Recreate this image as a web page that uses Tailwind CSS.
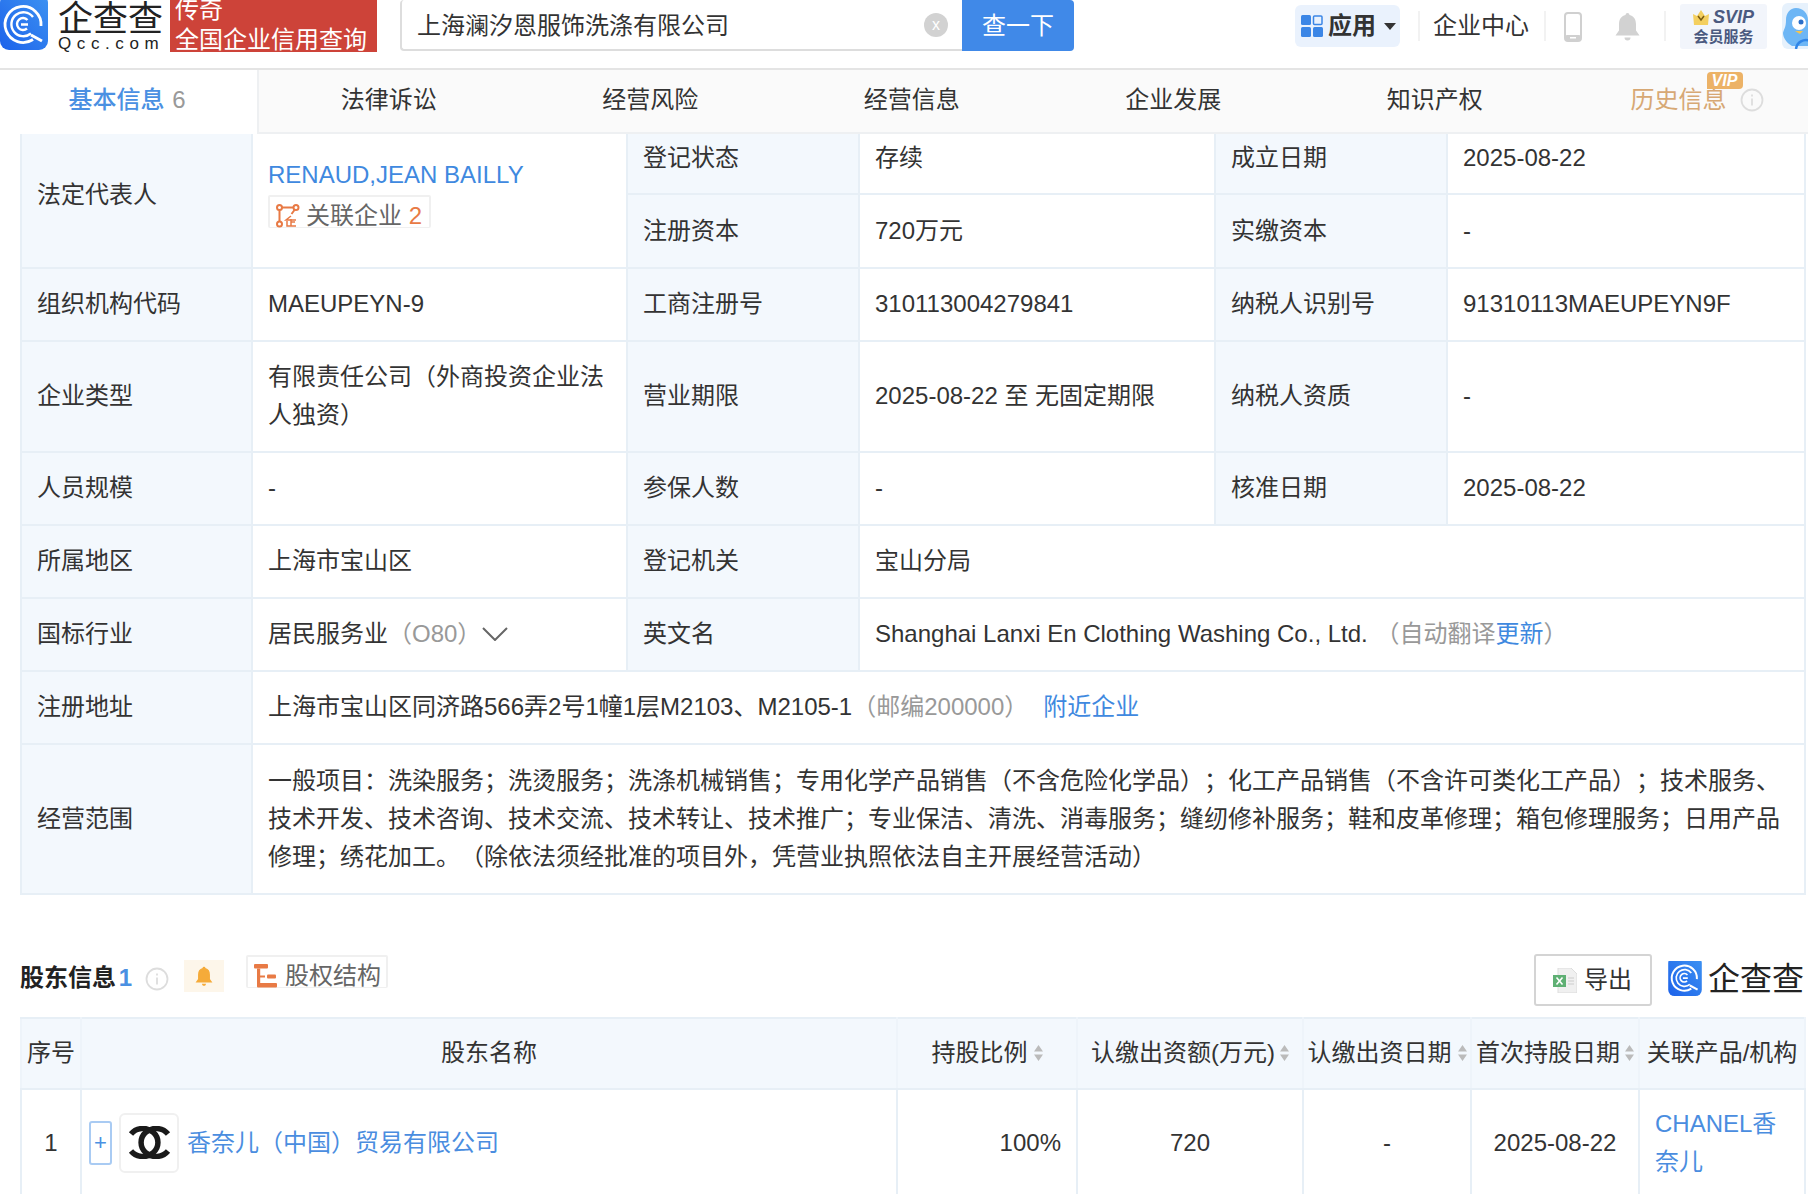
<!DOCTYPE html>
<html lang="zh-CN">
<head>
  <meta charset="UTF-8">
  <meta name="viewport" content="width=device-width, initial-scale=1.0">
  <title>上海澜汐恩服饰洗涤有限公司</title>
  <script src="https://cdn.jsdelivr.net/npm/@tailwindcss/browser@4"></script>
</head>
<body class="h-[1194px] w-[1808px] overflow-hidden bg-white text-[24px] text-[#333] [text-spacing-trim:space-all] font-['Liberation_Sans','Noto_Sans_CJK_SC',sans-serif]">
  <svg class="absolute size-0">
    <defs>
      <linearGradient id="qcc" x1="1" y1="0" x2="0" y2="1">
        <stop offset="0" stop-color="#3d93f2"/>
        <stop offset="1" stop-color="#1d62ea"/>
      </linearGradient>
      <symbol id="qcc-logo" viewBox="0 0 48 50">
        <rect x="0" y="-6" width="48" height="56" rx="9" fill="url(#qcc)"/>
        <path d="M33 39.500A18 18 0 1 1 41 26" fill="none" stroke="#fff" stroke-width="2.800"/>
        <path d="M31 33.500A12 12 0 1 1 33 17" fill="none" stroke="#fff" stroke-width="2.400"/>
        <path d="M27 28.500A6 6 0 1 1 27.500 20M21 24.500H28" fill="none" stroke="#fff" stroke-width="2.400"/>
        <path d="M31 35L42 41" stroke="#fff" stroke-width="3"/>
      </symbol>
    </defs>
  </svg>

  <!-- top bar -->
  <header class="flex h-[68px] items-start">
    <svg class="h-[50px] w-[48px] shrink-0"><use href="#qcc-logo"/></svg>
    <div class="ml-[10px] w-[104px] shrink-0 text-[#222]">
      <div class="mt-[1px] h-[36px] text-[35px] leading-[36px] whitespace-nowrap">企查查</div>
      <div class="text-[17px] leading-[14px] tracking-[5.600px] whitespace-nowrap">Qcc.com</div>
    </div>
    <div class="ml-[8px] h-[52px] w-[207px] shrink-0 overflow-hidden bg-[#cd4339] pl-[5px] leading-[30px] text-white">
      <div class="-mt-[5px]">传奇</div>
      <div class="whitespace-nowrap">全国企业信用查询</div>
    </div>
    <div class="ml-[23px] flex h-[51px] w-[562px] shrink-0 items-center justify-between rounded-l-[4px] border-2 border-r-0 border-t-0 border-[#ddd] pl-[15px] pr-[14px]">
      <span class="pt-[2px]">上海澜汐恩服饰洗涤有限公司</span>
      <span class="flex size-[24px] items-center justify-center rounded-full bg-[#d2d2d2] text-[16px] leading-none text-white">x</span>
    </div>
    <div class="flex h-[51px] w-[112px] shrink-0 items-center justify-center rounded-r-[4px] bg-[#4089e8] text-white">查一下</div>

    <div class="ml-[221px] mt-[5px] flex h-[42px] w-[105px] shrink-0 items-center rounded-[6px] bg-[#eaf2fd] pl-[6px]">
      <svg class="size-[22px]" viewBox="0 0 22 22" fill="#3b86e6"><rect width="10" height="10" rx="1.500"/><rect x="12.500" y="1" width="8.500" height="8.500" rx="1" fill="none" stroke="#3b86e6" stroke-width="1.500"/><rect y="12" width="10" height="10" rx="1.500"/><rect x="12" y="12" width="10" height="10" rx="1.500"/></svg>
      <span class="ml-[5px] font-bold">应用</span>
      <span class="ml-[8px] size-0 border-x-[6px] border-t-[7px] border-x-transparent border-t-[#333]"></span>
    </div>
    <div class="ml-[18px] mt-[11px] h-[30px] w-[2px] shrink-0 bg-[#f2f2f2]"></div>
    <div class="ml-[13px] mt-[7px] shrink-0 whitespace-nowrap leading-[38px]">企业中心</div>
    <div class="ml-[15px] mt-[11px] h-[30px] w-[2px] shrink-0 bg-[#f2f2f2]"></div>
    <svg class="ml-[18px] mt-[12px] h-[30px] w-[18px] shrink-0" viewBox="0 0 18 30"><rect x="1" y="1" width="16" height="28" rx="3" fill="none" stroke="#d0d0d0" stroke-width="2"/><rect x="1" y="23" width="16" height="6" rx="2" fill="#d0d0d0"/><rect x="6" y="25" width="6" height="1.500" fill="#fff"/></svg>
    <svg class="ml-[33px] mt-[12px] h-[30px] w-[25px] shrink-0" viewBox="0 0 25 30" fill="#d2d2d2"><path d="M10.500 3a2 2 0 0 1 4 0c4.500 1.200 6.500 4.500 6.500 9.500v6l3.500 5H.5l3.500-5v-6c0-5 2-8.300 6.500-9.500z"/><path d="M9.500 25.500h6a3 3 0 0 1-6 0z"/></svg>
    <div class="ml-[24px] mt-[11px] h-[30px] w-[2px] shrink-0 bg-[#f2f2f2]"></div>
    <div class="ml-[14px] mt-[4px] flex h-[45px] w-[87px] shrink-0 flex-col items-center rounded-[3px] bg-[#f2f5fb] text-[#4b5a80]">
      <div class="flex items-center gap-[4px] pt-[4px]">
        <svg class="h-[15px] w-[16px]" viewBox="0 0 16 15"><path d="M0 4l4 2 4-6 4 6 4-2-1 11H1z" fill="#f4cf5f"/><path d="M5 6l3 4 3-4" fill="none" stroke="#7a5b10" stroke-width="1.500"/></svg>
        <span class="text-[18px] leading-[19px] font-bold italic">SVIP</span>
      </div>
      <div class="text-[15px] leading-[20px] font-bold whitespace-nowrap">会员服务</div>
    </div>
    <svg class="ml-[15px] mt-[3px] h-[46px] w-[26px] shrink-0" viewBox="0 0 26 46"><rect width="30" height="46" rx="6" fill="#e6f1fc"/><path d="M14 5c7 0 12 5 12 12v26H10C5 40 1 35 1 30c1-4 3-6 3-13C4 10 8 5 14 5z" fill="#6db6f5"/><circle cx="17" cy="20" r="7" fill="#fff"/><circle cx="19" cy="19" r="2.500" fill="#2b6fc9"/><path d="M13 28h8l-3 3z" fill="#f6c44e"/><path d="M14 46a10 10 0 0 1 14-8" fill="none" stroke="#2f85e8" stroke-width="2.500"/></svg>
  </header>

  <!-- tabs -->
  <nav class="relative flex h-[66px] border-t-2 border-[#e4e4e4] text-center leading-[60px]">
    <div class="h-[64px] w-[257px] shrink-0 bg-white pr-[3px] font-medium text-[#4a90e2]">基本信息 <span class="ml-[1px] font-normal text-[#999]">6</span></div>
    <div class="flex h-[64px] flex-1 items-start border-b-2 border-l-2 border-[#eef0f2] bg-[#fafafa]">
      <div class="-ml-[1px] w-[261.500px]">法律诉讼</div>
      <div class="w-[261.500px]">经营风险</div>
      <div class="w-[261.500px]">经营信息</div>
      <div class="w-[261.500px]">企业发展</div>
      <div class="w-[261.500px]">知识产权</div>
      <div class="relative ml-[65px] flex w-[175px] items-start text-[#d7a874]">
        <span>历史信息</span>
        <svg class="ml-[13px] mt-[18px] size-[24px]" viewBox="0 0 24 24" fill="none" stroke="#ddd" stroke-width="1.800"><circle cx="12" cy="12" r="10.500"/><path d="M12 10.500v7M12 6.500v2"/></svg>
        <span class="absolute left-[76px] top-[2px] flex h-[17px] w-[36px] items-center justify-center rounded-t-[4px] rounded-br-[4px] bg-[#ecb266] text-[16px] leading-none font-bold italic text-white">VIP</span>
      </div>
    </div>
  </nav>

  <!-- basic info -->
  <table class="ml-[20px] w-[1784px] table-fixed border-collapse">
    <colgroup><col class="w-[231px]"><col class="w-[375px]"><col class="w-[232px]"><col class="w-[356px]"><col class="w-[232px]"><col class="w-[358px]"></colgroup>
    <tbody class="[&_td]:border-2 [&_td]:border-[#e7eff6] [&_td]:px-[15px] [&_td]:pb-[1px] [&_td]:leading-[38px]">
      <tr class="h-[60px]">
        <td rowspan="2" class="border-t-0! bg-[#f3f8fd] pb-[11px]!">法定代表人</td>
        <td rowspan="2" class="border-t-0! pb-[18px]!">
          <div class="text-[#3f89df]">RENAUD,JEAN BAILLY</div>
          <div class="mt-[1px] flex h-[33px] w-[163px] items-center rounded-[2px] border-2 border-b border-[#f0f0f0] pl-[6px] pt-[8px] text-[#666]">
            <svg class="size-[24px] shrink-0" viewBox="0 0 24 24" fill="none" stroke="#e87a45" stroke-width="2"><circle cx="3.500" cy="3.500" r="2.500"/><circle cx="20" cy="3.500" r="2.500"/><circle cx="3.500" cy="20" r="2.500"/><path d="M6 3.500h11.500M3.500 6v11.500M18.500 6l-3 4"/><path d="M15 12l-5 4h10M15 15v7M15 18h4M11 17v5h9" stroke-width="1.500"/></svg>
            <span class="ml-[6px] whitespace-nowrap">关联企业 <span class="text-[#e87a45]">2</span></span>
          </div>
        </td>
        <td class="border-t-0! bg-[#f3f8fd] pb-[11px]!">登记状态</td><td class="border-t-0! pb-[11px]!">存续</td>
        <td class="border-t-0! bg-[#f3f8fd] pb-[11px]!">成立日期</td><td class="border-t-0! pb-[11px]!">2025-08-22</td>
      </tr>
      <tr class="h-[74px]">
        <td class="bg-[#f3f8fd]">注册资本</td><td>720万元</td>
        <td class="bg-[#f3f8fd]">实缴资本</td><td>-</td>
      </tr>
      <tr class="h-[73px]">
        <td class="bg-[#f3f8fd]">组织机构代码</td><td>MAEUPEYN-9</td>
        <td class="bg-[#f3f8fd]">工商注册号</td><td>310113004279841</td>
        <td class="bg-[#f3f8fd]">纳税人识别号</td><td>91310113MAEUPEYN9F</td>
      </tr>
      <tr class="h-[111px]">
        <td class="bg-[#f3f8fd]">企业类型</td><td>有限责任公司（外商投资企业法人独资）</td>
        <td class="bg-[#f3f8fd]">营业期限</td><td>2025-08-22 至 无固定期限</td>
        <td class="bg-[#f3f8fd]">纳税人资质</td><td>-</td>
      </tr>
      <tr class="h-[73px]">
        <td class="bg-[#f3f8fd]">人员规模</td><td>-</td>
        <td class="bg-[#f3f8fd]">参保人数</td><td>-</td>
        <td class="bg-[#f3f8fd]">核准日期</td><td>2025-08-22</td>
      </tr>
      <tr class="h-[73px]">
        <td class="bg-[#f3f8fd]">所属地区</td><td>上海市宝山区</td>
        <td class="bg-[#f3f8fd]">登记机关</td><td colspan="3">宝山分局</td>
      </tr>
      <tr class="h-[73px]">
        <td class="bg-[#f3f8fd]">国标行业</td>
        <td><div class="flex items-center whitespace-nowrap">居民服务业<span class="text-[#999]">（O80）</span><svg class="ml-[1px] h-[14px] w-[26px]" viewBox="0 0 26 14" fill="none" stroke="#666" stroke-width="2"><path d="M1 1l12 12L25 1"/></svg></div></td>
        <td class="bg-[#f3f8fd]">英文名</td>
        <td colspan="3">Shanghai Lanxi En Clothing Washing Co., Ltd. <span class="ml-[1px] text-[#999]">（自动翻译<span class="text-[#3f89df]">更新</span>）</span></td>
      </tr>
      <tr class="h-[73px]">
        <td class="bg-[#f3f8fd]">注册地址</td>
        <td colspan="5">上海市宝山区同济路566弄2号1幢1层M2103、M2105-1<span class="text-[#999]">（邮编200000）</span><span class="ml-[15px] text-[#3f89df]">附近企业</span></td>
      </tr>
      <tr class="h-[150px]">
        <td class="bg-[#f3f8fd]">经营范围</td>
        <td colspan="5">一般项目：洗染服务；洗烫服务；洗涤机械销售；专用化学产品销售（不含危险化学品）；化工产品销售（不含许可类化工产品）；技术服务、技术开发、技术咨询、技术交流、技术转让、技术推广；专业保洁、清洗、消毒服务；缝纫修补服务；鞋和皮革修理；箱包修理服务；日用产品修理；绣花加工。（除依法须经批准的项目外，凭营业执照依法自主开展经营活动）</td>
      </tr>
    </tbody>
  </table>

  <!-- shareholders -->
  <section class="mt-[59px] pl-[20px]">
    <div class="flex h-[52px] items-start">
      <h2 class="mt-[6px] leading-[36px] font-bold text-[#222]">股东信息 <span class="-ml-[4px] text-[#4a90e2]">1</span></h2>
      <svg class="ml-[13px] mt-[13px] size-[24px] shrink-0" viewBox="0 0 24 24" fill="none" stroke="#ddd" stroke-width="1.800"><circle cx="12" cy="12" r="10.500"/><path d="M12 10.500v7M12 6.500v2"/></svg>
      <div class="ml-[15px] mt-[6px] flex h-[32px] w-[40px] shrink-0 items-center justify-center bg-[#fdf6ea]">
        <svg class="h-[21px] w-[18px]" viewBox="0 0 25 30" fill="#f5ab3a"><path d="M10.500 3a2 2 0 0 1 4 0c4.500 1.200 6.500 4.500 6.500 9.500v6l3.500 5H.5l3.500-5v-6c0-5 2-8.300 6.500-9.500z"/><path d="M9.500 25.500h6a3 3 0 0 1-6 0z"/></svg>
      </div>
      <div class="ml-[22px] mt-[1px] flex h-[33px] w-[142px] shrink-0 items-center rounded-[2px] border-2 border-b border-[#f0f0f0] pl-[6px] pt-[7px] text-[#666]">
        <svg class="h-[24px] w-[24px] shrink-0" viewBox="0 0 24 24" fill="#e87a45"><rect x="0" y="0" width="14" height="4.500" rx="1"/><rect x="3" y="4.500" width="3.200" height="17"/><rect x="3" y="19" width="20" height="4.500" rx="1"/><rect x="13" y="10.500" width="9" height="4" rx="1"/><rect x="6" y="11.500" width="5" height="2"/></svg>
        <span class="ml-[7px] whitespace-nowrap">股权结构</span>
      </div>
      <div class="ml-auto flex h-[52px] w-[118px] shrink-0 items-center rounded-[3px] border-2 border-[#d4d4d4] pl-[17px]">
        <svg class="h-[25px] w-[24px] shrink-0" viewBox="0 0 24 25"><path d="M5 0h13l6 6v19H5z" fill="#f0f0f0" stroke="#ddd"/><rect x="0" y="7" width="13" height="12" fill="#5fb074"/><path d="M3.500 9.500l6 7M9.500 9.500l-6 7" stroke="#fff" stroke-width="1.600"/><path d="M15 10h6M15 13h6M15 16h6" stroke="#ccc"/></svg>
        <span class="ml-[7px]">导出</span>
      </div>
      <svg class="ml-[15px] mt-[7px] h-[35px] w-[36px] shrink-0"><use href="#qcc-logo"/></svg>
      <div class="ml-[5px] mr-[4px] mt-[5px] w-[96px] shrink-0 whitespace-nowrap text-[32px] leading-[40px] text-[#222]">企查查</div>
    </div>
  </section>

  <table class="ml-[20px] mt-[11px] w-[1784px] table-fixed border-collapse">
    <colgroup><col class="w-[60px]"><col class="w-[816px]"><col class="w-[180px]"><col class="w-[226px]"><col class="w-[168px]"><col class="w-[168px]"><col class="w-[166px]"></colgroup>
    <thead class="[&_th]:border-2 [&_th]:border-x-[#eef4fa] [&_th]:border-y-[#e7eff6] [&_th]:bg-[#f3f8fd] [&_th]:pb-[1px] [&_th]:font-normal">
      <tr class="h-[71px]">
        <th class="text-left pl-[5px]">序号</th>
        <th>股东名称</th>
        <th><div class="flex items-center justify-center gap-[6px] whitespace-nowrap">持股比例<svg class="h-[16px] w-[9px]" viewBox="0 0 9 16" fill="#bbb"><path d="M4.500 0L9 6.500H0zM4.500 16L0 9.500h9z"/></svg></div></th>
        <th><div class="flex items-center justify-center gap-[5px] whitespace-nowrap">认缴出资额(万元)<svg class="h-[16px] w-[9px]" viewBox="0 0 9 16" fill="#bbb"><path d="M4.500 0L9 6.500H0zM4.500 16L0 9.500h9z"/></svg></div></th>
        <th><div class="flex items-center justify-center gap-[6px] whitespace-nowrap">认缴出资日期<svg class="h-[16px] w-[9px]" viewBox="0 0 9 16" fill="#bbb"><path d="M4.500 0L9 6.500H0zM4.500 16L0 9.500h9z"/></svg></div></th>
        <th><div class="flex items-center justify-center gap-[5px] whitespace-nowrap">首次持股日期<svg class="h-[16px] w-[9px]" viewBox="0 0 9 16" fill="#bbb"><path d="M4.500 0L9 6.500H0zM4.500 16L0 9.500h9z"/></svg></div></th>
        <th class="whitespace-nowrap">关联产品/机构</th>
      </tr>
    </thead>
    <tbody class="[&_td]:border-2 [&_td]:border-[#e7eff6] [&_td]:pb-[3px] [&_td]:leading-[38px]">
      <tr class="h-[110px]">
        <td class="text-center">1</td>
        <td class="pl-[7px]">
          <div class="flex items-center">
            <span class="flex h-[44px] w-[23px] shrink-0 items-center justify-center rounded-[3px] border-2 border-[#a9cbf3] text-[22px] leading-none text-[#4a90e2]">+</span>
            <span class="ml-[7px] flex size-[60px] shrink-0 items-center justify-center rounded-[6px] border-2 border-[#f0f0f0]">
              <svg class="h-[33px] w-[45px]" viewBox="0 0 45 33" fill="none" stroke="#1a1a1a" stroke-width="5.500"><path d="M4 8A15 14 0 1 1 4 25"/><path d="M41 8A15 14 0 1 0 41 25"/></svg>
            </span>
            <span class="ml-[8px] text-[#4a8ddf]">香奈儿（中国）贸易有限公司</span>
          </div>
        </td>
        <td class="pr-[15px] text-right">100%</td>
        <td class="text-center">720</td>
        <td class="text-center">-</td>
        <td class="text-center">2025-08-22</td>
        <td class="pl-[15px] pr-[20px] text-[#4a8ddf]">CHANEL香奈儿</td>
      </tr>
    </tbody>
  </table>
</body>
</html>
